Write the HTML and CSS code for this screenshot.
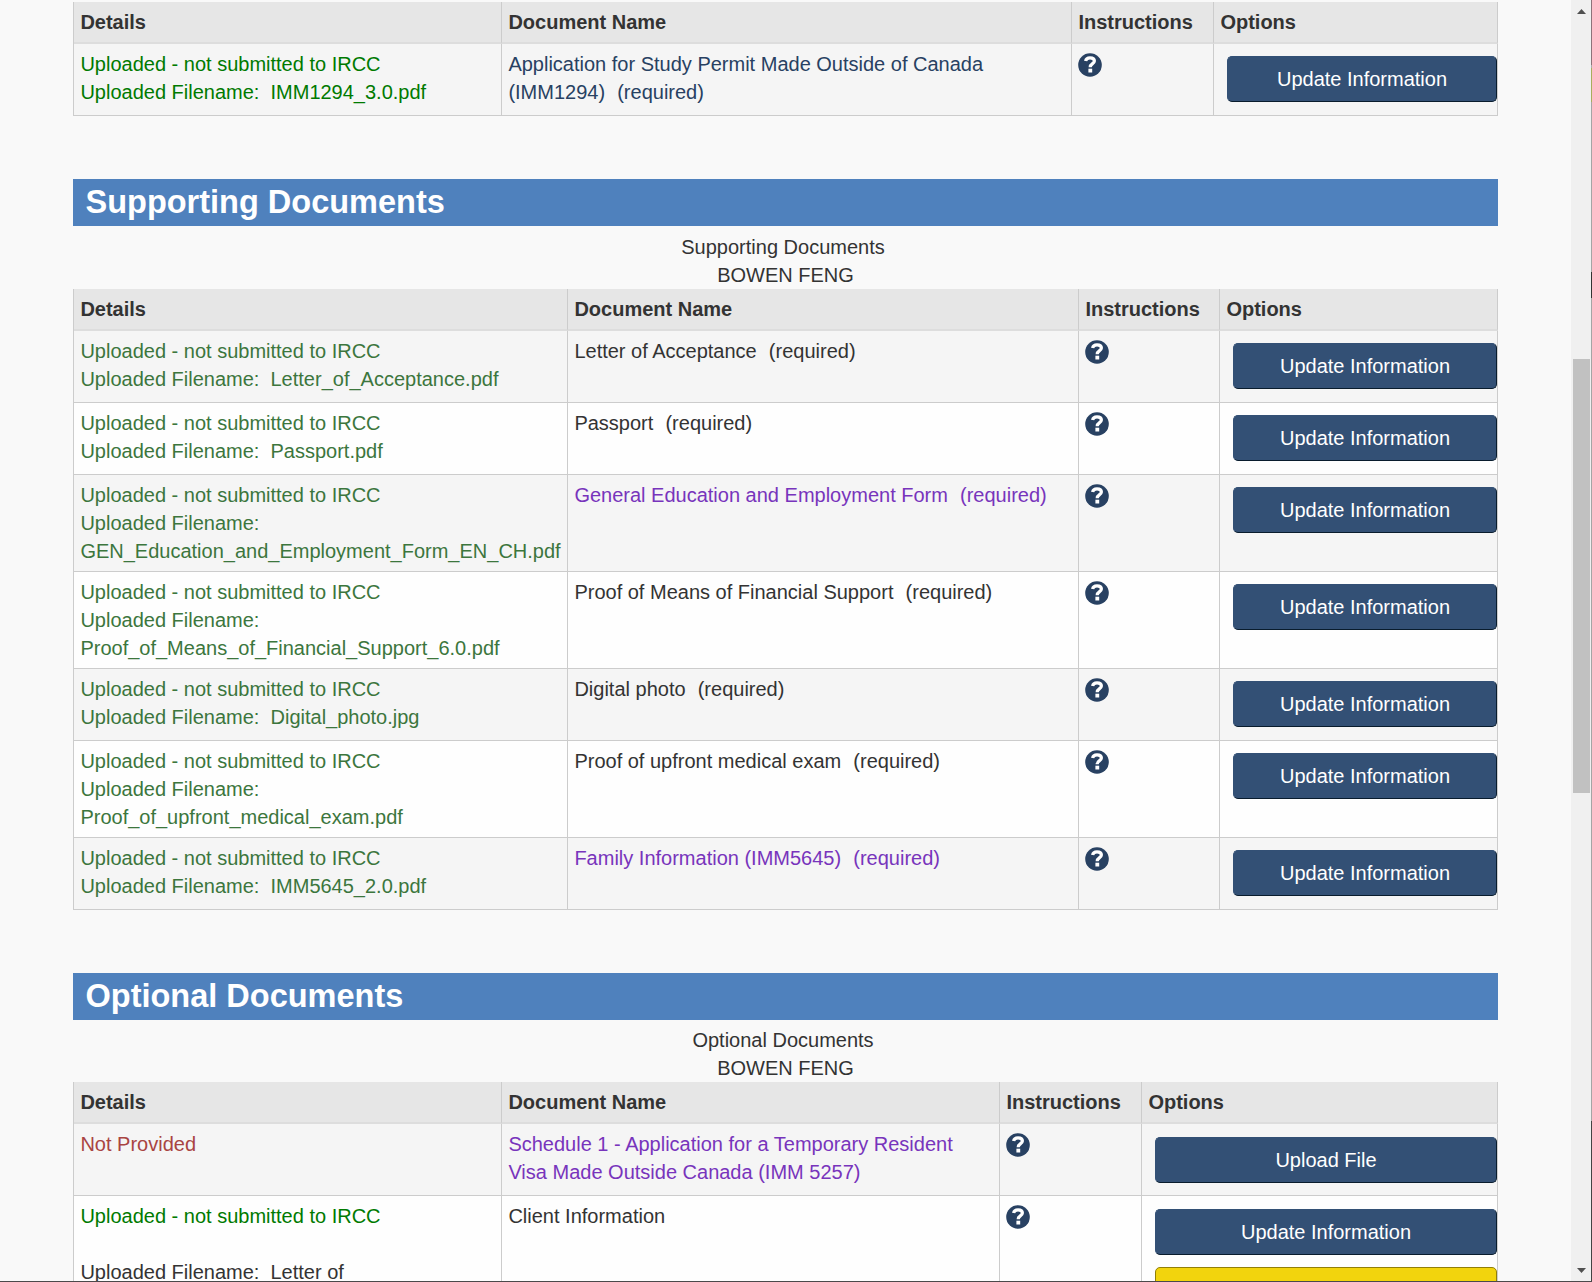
FILE: index.html
```html
<!DOCTYPE html>
<html lang="en">
<head>
<meta charset="utf-8">
<title>Supporting Documents</title>
<link rel="stylesheet" href="styles.css">
</head>
<body>
<svg class="defs" aria-hidden="true">
  <symbol id="help" viewBox="0 0 24 24">
    <circle cx="12" cy="12" r="11.8" fill="#284162"/>
    <path d="M7.6 8.1C8 5.8 9.6 4.9 12 4.9C14.8 4.9 16.4 6.1 16.4 8.1C16.4 10.7 12.2 10.6 12.2 14.2" fill="none" stroke="#fff" stroke-width="3.2"/>
    <rect x="10.4" y="15.7" width="3.8" height="3.8" fill="#fff"/>
  </symbol>
</svg>
<div class="window">
  <main class="page">
    <table class="docs forms">
      <colgroup><col class="c1"><col class="c2"><col class="c3"><col class="c4"></colgroup>
      <thead><tr><th>Details</th><th>Document Name</th><th>Instructions</th><th>Options</th></tr></thead>
      <tbody>
        <tr><td class="done">Uploaded - not submitted to IRCC<br>Uploaded Filename:&nbsp; IMM1294_3.0.pdf</td><td class="link">Application for Study Permit Made Outside of Canada<br>(IMM1294)&nbsp; <span class="req">(required)</span></td><td><svg class="help"><use href="#help"/></svg></td><td class="options"><button class="btn">Update Information</button></td></tr>
      </tbody>
    </table>

    <h2 class="banner">Supporting Documents</h2>
    <div class="caption"><span class="caption-title">Supporting Documents</span><span>BOWEN FENG</span></div>
    <table class="docs supporting">
      <colgroup><col class="c1"><col class="c2"><col class="c3"><col class="c4"></colgroup>
      <thead><tr><th>Details</th><th>Document Name</th><th>Instructions</th><th>Options</th></tr></thead>
      <tbody>
        <tr><td class="success">Uploaded - not submitted to IRCC<br>Uploaded Filename:&nbsp; Letter_of_Acceptance.pdf</td><td>Letter of Acceptance&nbsp; <span class="req">(required)</span></td><td><svg class="help"><use href="#help"/></svg></td><td class="options"><button class="btn">Update Information</button></td></tr>
        <tr><td class="success">Uploaded - not submitted to IRCC<br>Uploaded Filename:&nbsp; Passport.pdf</td><td>Passport&nbsp; <span class="req">(required)</span></td><td><svg class="help"><use href="#help"/></svg></td><td class="options"><button class="btn">Update Information</button></td></tr>
        <tr><td class="success">Uploaded - not submitted to IRCC<br>Uploaded Filename:<br>GEN_Education_and_Employment_Form_EN_CH.pdf</td><td class="visited">General Education and Employment Form&nbsp; <span class="req">(required)</span></td><td><svg class="help"><use href="#help"/></svg></td><td class="options"><button class="btn">Update Information</button></td></tr>
        <tr><td class="success">Uploaded - not submitted to IRCC<br>Uploaded Filename:<br>Proof_of_Means_of_Financial_Support_6.0.pdf</td><td>Proof of Means of Financial Support&nbsp; <span class="req">(required)</span></td><td><svg class="help"><use href="#help"/></svg></td><td class="options"><button class="btn">Update Information</button></td></tr>
        <tr><td class="success">Uploaded - not submitted to IRCC<br>Uploaded Filename:&nbsp; Digital_photo.jpg</td><td>Digital photo&nbsp; <span class="req">(required)</span></td><td><svg class="help"><use href="#help"/></svg></td><td class="options"><button class="btn">Update Information</button></td></tr>
        <tr><td class="success">Uploaded - not submitted to IRCC<br>Uploaded Filename:<br>Proof_of_upfront_medical_exam.pdf</td><td>Proof of upfront medical exam&nbsp; <span class="req">(required)</span></td><td><svg class="help"><use href="#help"/></svg></td><td class="options"><button class="btn">Update Information</button></td></tr>
        <tr><td class="success">Uploaded - not submitted to IRCC<br>Uploaded Filename:&nbsp; IMM5645_2.0.pdf</td><td class="visited">Family Information (IMM5645)&nbsp; <span class="req">(required)</span></td><td><svg class="help"><use href="#help"/></svg></td><td class="options"><button class="btn">Update Information</button></td></tr>
      </tbody>
    </table>

    <h2 class="banner">Optional Documents</h2>
    <div class="caption caption-tight"><span class="caption-title">Optional Documents</span><span>BOWEN FENG</span></div>
    <table class="docs optional">
      <colgroup><col class="c1"><col class="c2"><col class="c3"><col class="c4"></colgroup>
      <thead><tr><th>Details</th><th>Document Name</th><th>Instructions</th><th>Options</th></tr></thead>
      <tbody>
        <tr><td class="missing">Not Provided</td><td class="visited">Schedule 1 - Application for a Temporary Resident<br>Visa Made Outside Canada (IMM 5257)</td><td><svg class="help"><use href="#help"/></svg></td><td class="options"><button class="btn">Upload File</button></td></tr>
        <tr><td><span class="done">Uploaded - not submitted to IRCC</span><br><br>Uploaded Filename:&nbsp; Letter of</td><td>Client Information</td><td><svg class="help"><use href="#help"/></svg></td><td class="options"><button class="btn">Update Information</button><button class="btn btn-warning"></button></td></tr>
      </tbody>
    </table>
  </main>
  <div class="scrollbar">
    <svg class="arrow" viewBox="0 0 9 5"><path d="M0 5L4.5 0L9 5z"/></svg>
    <div class="thumb"></div>
    <svg class="arrow" viewBox="0 0 9 5"><path d="M0 0L4.5 5L9 0z"/></svg>
  </div>
  <div class="edge"></div>
</div>
</body>
</html>
```
FILE: styles.css
```css
* { box-sizing: border-box; }
body {
  margin: 0;
  height: 1282px;
  overflow: hidden;
  background: #f9f9f9;
  color: #333;
  font: 20px/28px "Liberation Sans", Arial, sans-serif;
}
.defs { display: none; }
.window {
  display: flex;
  height: 1282px;
  overflow: hidden;
  border-bottom: 1px solid #4b494b;
}
.page {
  flex: 1;
  padding: 2px 73px 0;
  overflow: hidden;
}

.docs {
  width: 1425px;
  table-layout: fixed;
  border-collapse: separate;
  border-spacing: 0;
  border-left: 1px solid #ccc;
}
.forms .c1, .optional .c1 { width: 428px; }
.forms .c2 { width: 570px; }
.forms .c3, .optional .c3 { width: 142px; }
.forms .c4 { width: 284px; }
.supporting .c1 { width: 494px; }
.supporting .c2 { width: 511px; }
.supporting .c3 { width: 141px; }
.supporting .c4 { width: 278px; }
.optional .c2 { width: 498px; }
.optional .c4 { width: 356px; }

.docs th {
  height: 42px;
  padding: 6px 6px 6px 6.4px;
  background: #e6e6e6;
  border-right: 1px solid #ccc;
  border-bottom: 2px solid #ddd;
  text-align: left;
}
.docs td {
  height: 72px;
  padding: 6px 0 6px 6.4px;
  border-right: 1px solid #ccc;
  border-bottom: 1px solid #ccc;
  vertical-align: top;
  white-space: nowrap;
  background: #fefefe;
}
.docs tbody tr:nth-child(odd) td { background: #f5f5f5; }
.docs .options { padding: 12px 0 0 13px; }
.optional .options { padding-top: 13px; }

.done { color: #007a00; }
.success { color: #3c763d; }
.missing { color: #a94442; }
.link { color: #284162; }
.visited { color: #7834bc; }
.req { margin-left: 1px; }

.help {
  display: block;
  width: 24px;
  height: 24px;
  margin: 2.5px 0 0 -0.4px;
}
.btn {
  display: block;
  width: 100%;
  height: 46px;
  padding: 0;
  border: 1px solid #335075;
  border-right-color: #091c2d;
  border-bottom-color: #091c2d;
  border-radius: 5px;
  background: #335075;
  color: #fff;
  font: inherit;
}
.btn-warning {
  margin-top: 12px;
  background: #f2d40d;
  border-color: #917f08;
}

.banner {
  width: 1425px;
  height: 47px;
  margin: 63px 0 0;
  padding-left: 12.5px;
  background: #4f81bd;
  color: #fff;
  font-size: 32.5px;
  line-height: 47px;
}
.caption {
  display: flex;
  flex-direction: column;
  align-items: center;
  width: 1425px;
  padding-top: 7px;
}
.caption-tight { padding-top: 6px; }
.caption-title { padding-right: 5px; }

.scrollbar {
  display: flex;
  flex-direction: column;
  align-items: center;
  justify-content: space-between;
  width: 20px;
  padding: 9px 0 8px;
  background: #f0f0f0;
}
.arrow { width: 9px; height: 5px; fill: #505050; }
.thumb {
  width: 17px;
  height: 434px;
  margin: 345px 0 auto;
  background: #c1c1c1;
}
.edge {
  width: 1px;
  background: linear-gradient(#8d7379 65px, #aaa 65px 68px, #a9ad5e 68px 102px, #a5a5a5 102px 272px, #333 272px 298px, #a5a5a5 298px 1121px, #444 1121px);
}
```
